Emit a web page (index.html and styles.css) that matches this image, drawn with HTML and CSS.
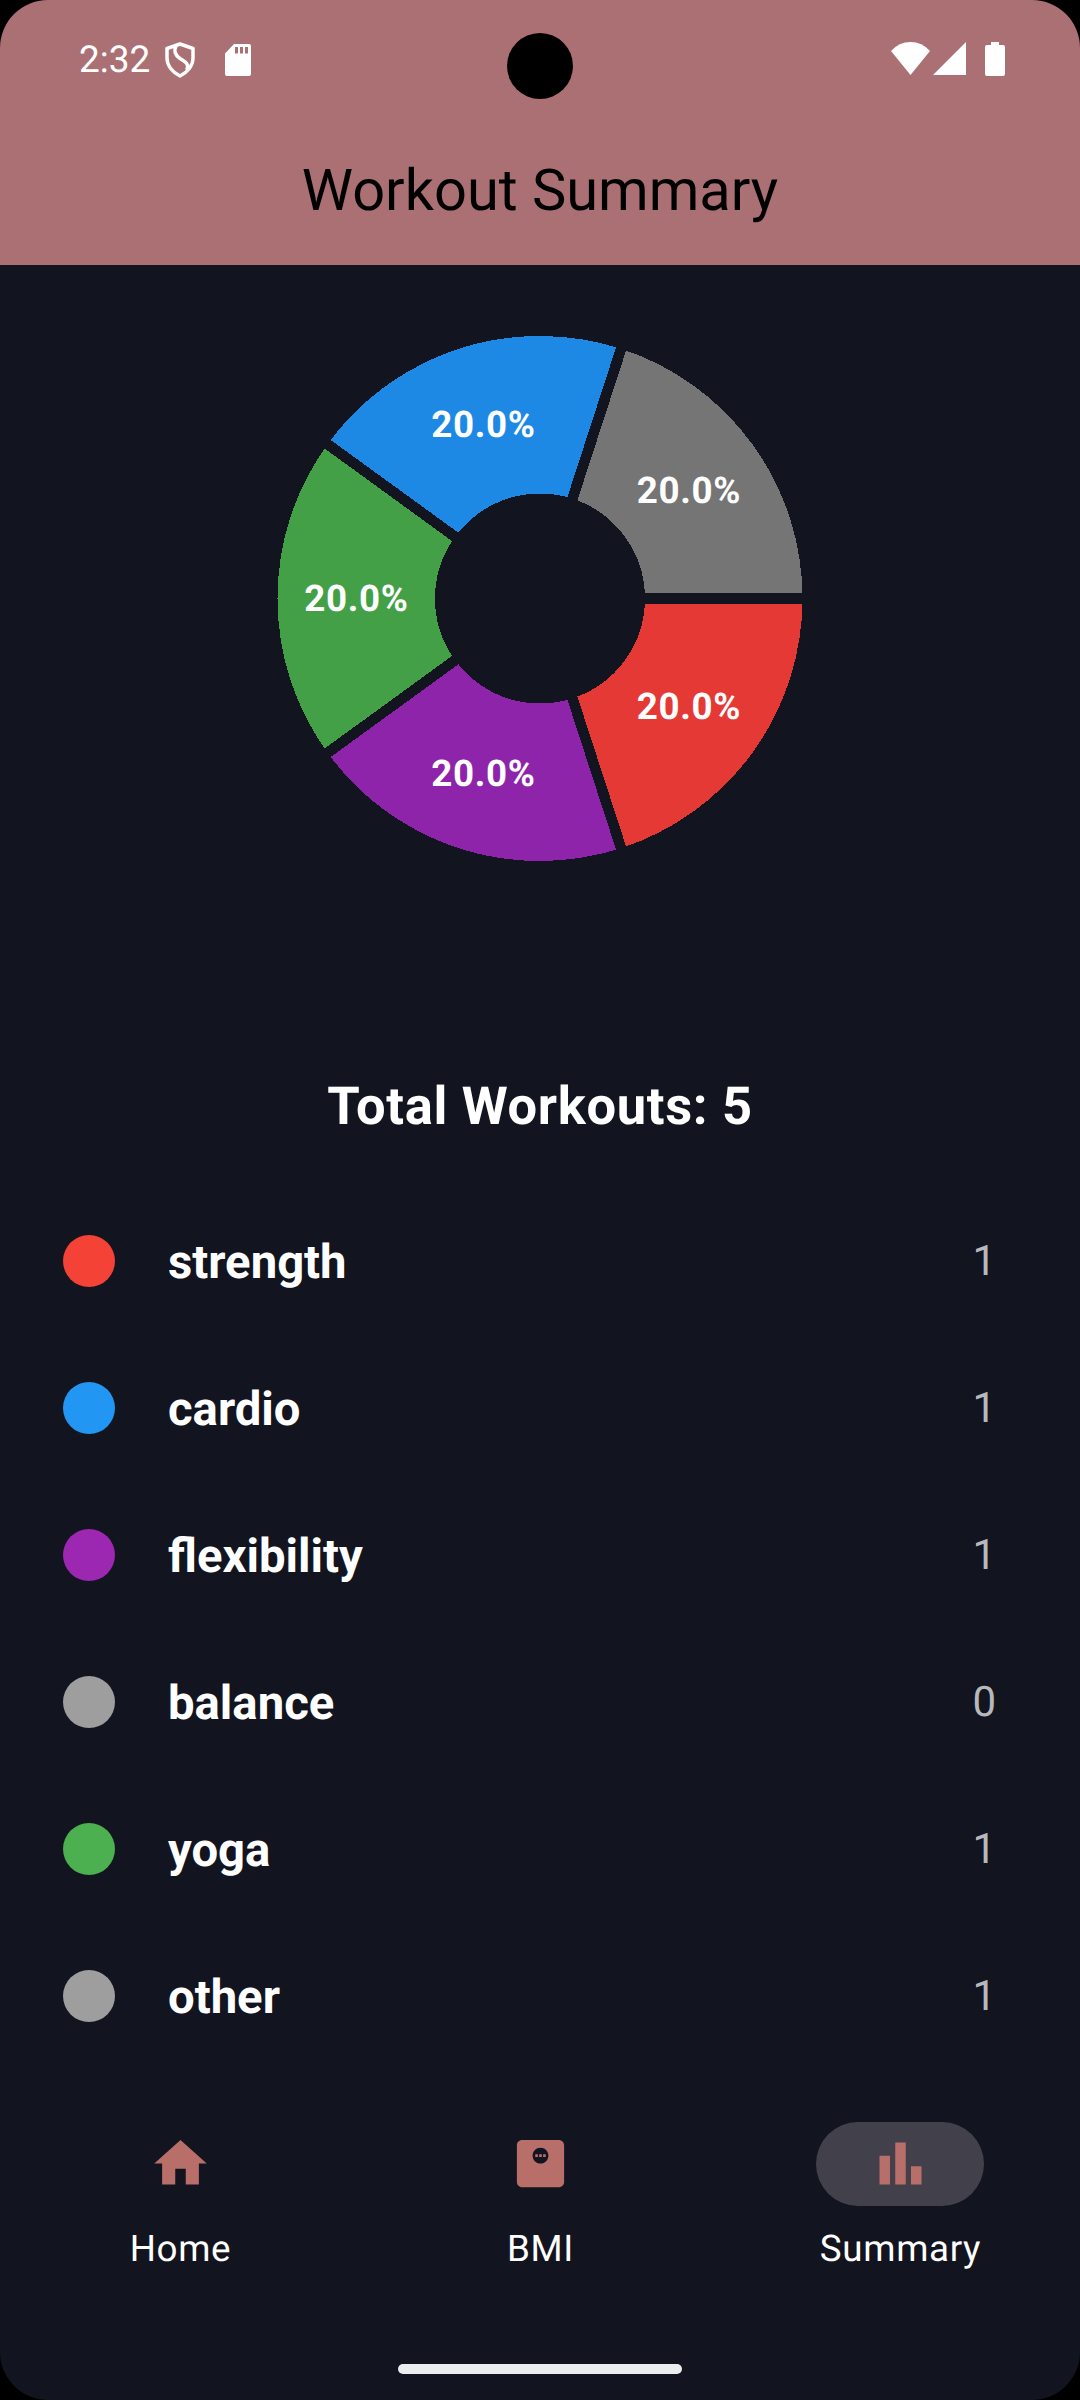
FILE: index.html
```html
<!DOCTYPE html>
<html lang="en">
<head>
<meta charset="utf-8">
<title>Workout Summary</title>
<link rel="stylesheet" href="styles.css">
</head>
<body>
<div class="screen">
  <header class="header">
    <div class="status">
      <span class="time">2:32</span>
      <svg class="shield" viewBox="0 0 30 36"><path d="M15 2 28 6.500V16C28 24 22 30.500 15 34 8 30.500 2 24 2 16V6.500Z"/><path d="M11 4C8.500 9 10 13 15 16.500 20 19.500 25 22 21.500 28"/></svg>
      <svg class="sd" viewBox="0 0 26 32"><path fill-rule="evenodd" d="M9 0H24Q26 0 26 2V30Q26 32 24 32H2Q0 32 0 30V9.500ZM10 3V9.500H13V3ZM15 3V9.500H18V3ZM20 3V9.500H23V3Z"/></svg>
      <svg class="wifi" viewBox="0 0 39 33"><path d="M0 9Q8 0 19.500 0T39 9L19.500 33Z"/></svg>
      <svg class="signal" viewBox="0 0 33 33"><path d="M33 0V33H0Z"/></svg>
      <svg class="battery" viewBox="0 0 20 34"><path d="M6 0H14V3H18Q20 3 20 5V32Q20 34 18 34H2Q0 34 0 32V5Q0 3 2 3H6Z"/></svg>
    </div>
    <h1 class="title">Workout Summary</h1>
    <div class="camera"></div>
  </header>

  <main class="content">
    <svg class="chart" viewBox="0 0 526 526">
      <g class="ring" transform="translate(263 263.500)">
        <circle class="red" r="183.750" pathLength="100" stroke-dashoffset="0"/>
        <circle class="purple" r="183.750" pathLength="100" stroke-dashoffset="-20"/>
        <circle class="green" r="183.750" pathLength="100" stroke-dashoffset="-40"/>
        <circle class="blue" r="183.750" pathLength="100" stroke-dashoffset="-60"/>
        <circle class="gray" r="183.750" pathLength="100" stroke-dashoffset="-80"/>
        <path class="gaps" d="M90 0H275M27.810 85.600 84.980 261.540M-72.810 52.900-222.480 161.640M-72.810-52.900-222.480-161.640M27.810-85.600 84.980-261.540"/>
      </g>
      <g class="labels">
        <text x="412" y="384">20.0%</text>
        <text x="206.500" y="451">20.0%</text>
        <text x="79.500" y="276">20.0%</text>
        <text x="206.500" y="102">20.0%</text>
        <text x="412" y="168">20.0%</text>
      </g>
    </svg>

    <h2 class="total">Total Workouts: 5</h2>

    <ul class="list">
      <li class="row"><i class="dot dot-red"></i><span class="name">strength</span><span class="count">1</span></li>
      <li class="row"><i class="dot dot-blue"></i><span class="name">cardio</span><span class="count">1</span></li>
      <li class="row"><i class="dot dot-purple"></i><span class="name">flexibility</span><span class="count">1</span></li>
      <li class="row"><i class="dot dot-gray"></i><span class="name">balance</span><span class="count">0</span></li>
      <li class="row"><i class="dot dot-green"></i><span class="name">yoga</span><span class="count">1</span></li>
      <li class="row"><i class="dot dot-gray"></i><span class="name">other</span><span class="count">1</span></li>
    </ul>
  </main>

  <nav class="nav">
    <a class="tab">
      <span class="pill"><svg viewBox="0 0 24 24"><path d="M10 20v-6h4v6h5v-8h3L12 3 2 12h3v8z"/></svg></span>
      <span class="tab-label">Home</span>
    </a>
    <a class="tab">
      <span class="pill"><svg viewBox="0 0 24 24"><path fill-rule="evenodd" d="M19 3H5c-1.100 0-2 .9-2 2v14c0 1.100.9 2 2 2h14c1.100 0 2-.9 2-2V5c0-1.100-.9-2-2-2zM12 12c-1.660 0-3-1.340-3-3s1.340-3 3-3 3 1.340 3 3-1.340 3-3 3z"/><path d="M10 8.500h1v1h-1zM11.500 8.500h1v1h-1zM13 8.500h1v1h-1z"/></svg></span>
      <span class="tab-label">BMI</span>
    </a>
    <a class="tab">
      <span class="pill pill-active"><svg viewBox="0 0 24 24"><path d="M4 9h4v11H4zM16 13h4v7h-4zM10 4h4v16h-4z"/></svg></span>
      <span class="tab-label">Summary</span>
    </a>
  </nav>
  <div class="gesture"></div>
</div>
</body>
</html>
```
FILE: styles.css
```css
* { box-sizing: border-box; margin: 0; padding: 0; }

body {
  background: #000;
  font-family: Roboto, sans-serif;
  text-rendering: geometricPrecision;
}

.screen {
  display: flex;
  flex-direction: column;
  width: 1080px;
  height: 2400px;
  border-radius: 48px;
  overflow: hidden;
  background: #12141f;
  color: #fff;
}

.header {
  position: relative;
  height: 265px;
  background: #ab7073;
}

.status {
  display: flex;
  align-items: flex-start;
  height: 137px;
  padding: 42px 75px 0 79px;
  fill: #fff;
}

.time { width: 86px; margin-top: -3px; font-size: 37px; line-height: 44px; }
.shield { width: 30px; height: 36px; fill: none; stroke: #fff; stroke-width: 3.5; stroke-linejoin: round; }
.sd { width: 26px; height: 32px; margin: 2px auto 0 30px; }
.wifi { width: 39px; height: 33px; }
.signal { width: 33px; height: 33px; margin-left: 3px; }
.battery { width: 20px; height: 34px; margin-left: 19px; }

.title {
  color: #000;
  font-size: 57.75px;
  font-weight: 400;
  line-height: 108px;
  text-align: center;
}

.camera {
  position: absolute;
  left: 507px;
  top: 33px;
  width: 66px;
  height: 66px;
  border-radius: 50%;
  background: #000;
}

.content {
  display: flex;
  flex-direction: column;
  align-items: center;
  height: 1822px;
  padding-top: 70px;
}

.chart { width: 526px; height: 526px; }
.ring { fill: none; stroke-width: 157.5; stroke-dasharray: 20 80; shape-rendering: crispEdges; }
.red { stroke: #e53935; }
.purple { stroke: #8e24aa; }
.green { stroke: #43a047; }
.blue { stroke: #1e88e5; }
.gray { stroke: #757575; }
.gaps { stroke: #12141f; stroke-width: 10.5; stroke-dasharray: none; }
.labels { fill: #fff; font-size: 36.75px; font-weight: 700; letter-spacing: 0.66px; text-anchor: middle; }

.total { margin-top: 214px; font-size: 52.5px; font-weight: 700; line-height: 62px; letter-spacing: 0.66px; }

.list { width: 100%; margin-top: 51px; list-style: none; }
.row { display: flex; align-items: center; height: 147px; padding: 0 84px 0 63px; }
.dot { width: 52px; height: 52px; margin-bottom: 2px; border-radius: 50%; }
.dot-red { background: #f44336; }
.dot-blue { background: #2196f3; }
.dot-purple { background: #9c27b0; }
.dot-gray { background: #9e9e9e; }
.dot-green { background: #4caf50; }
.name { flex: 1; margin-left: 53px; font-size: 47.25px; font-weight: 700; }
.count { color: #b8b8bc; font-size: 42px; }

.nav { display: flex; height: 250px; padding-top: 35px; }
.tab { flex: 1; display: flex; flex-direction: column; align-items: center; }
.pill { display: flex; align-items: center; justify-content: center; width: 168px; height: 84px; padding-bottom: 1px; border-radius: 42px; fill: #b86f69; }
.pill-active { background: #42404b; }
.pill svg { width: 63px; height: 63px; }
.tab-label { margin-top: 21px; padding-left: 1px; font-size: 36.75px; line-height: 44px; letter-spacing: 0.66px; }

.gesture { width: 284px; height: 10px; margin: 27px auto 0; border-radius: 5px; background: #ecedef; }
```
